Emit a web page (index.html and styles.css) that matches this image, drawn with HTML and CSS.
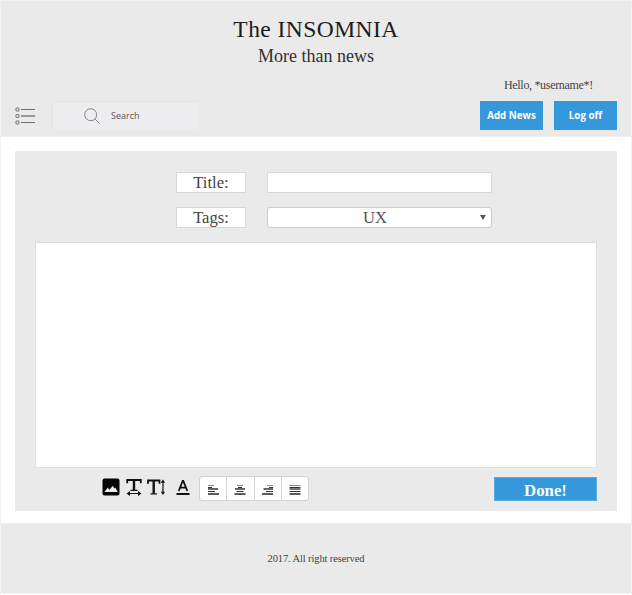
FILE: index.html
```html
<!DOCTYPE html>
<html lang="en">
<head>
<meta charset="utf-8">
<title>The INSOMNIA</title>
<link rel="stylesheet" href="styles.css">
</head>
<body>
<div class="page">
  <header class="header">
    <h1 class="brand">The INSOMNIA</h1>
    <p class="tagline">More than news</p>
    <p class="greeting">Hello, *username*!</p>
    <div class="toolbar">
      <svg class="menu" width="20" height="18" viewBox="0 0 20 18" fill="none" stroke="#6d6e73">
        <path d="M6 2.500h14M6 15.500h14"/><path d="M6 9h14" stroke="#96979c" stroke-width="2"/>
        <rect x="1" y="1" width="3" height="3" rx=".5"/><rect x="1" y="7.500" width="3" height="3" rx=".5"/><rect x="1" y="14" width="3" height="3" rx=".5"/>
      </svg>
      <div class="search">
        <svg width="16" height="16" viewBox="0 0 16 16" fill="none" stroke="#85868a"><circle cx="6.700" cy="6.700" r="6"/><path d="M11 11l4.500 4.500"/></svg>
        <span>Search</span>
      </div>
      <button class="btn add">Add News</button>
      <button class="btn">Log off</button>
    </div>
  </header>
  <main class="main">
    <form class="panel">
      <div class="row"><label class="label">Title:</label><div class="field"></div></div>
      <div class="row"><label class="label">Tags:</label>
        <div class="field select"><span>UX</span><svg class="caret" width="6" height="5" viewBox="0 0 6 5"><path d="M0 0h6L3 5z" fill="#555"/></svg></div>
      </div>
      <div class="editor"></div>
      <div class="actions">
        <svg class="ico-image" width="18" height="18" viewBox="0 0 18 18"><rect x=".5" y=".5" width="17" height="17" rx="2" fill="#050505"/><path d="M2.400 14l3.300-4.300 1.800 2 3.300-3.900 1.500 2.600 1-1 2.500 4.600z" fill="#eee"/></svg>
        <svg class="ico-width" width="16" height="18" viewBox="0 0 16 18" fill="none" stroke="#111"><path d="M1.200 5.200V2h13.600v3.200" stroke-width="1.800"/><path d="M8 2v10" stroke-width="2.400"/><path d="M4.500 12.400h7M2 15.500h12" stroke-width="1.200"/><path d="M.5 15.500l3.500-2.500v5zM15.500 15.500l-3.500-2.500v5z" fill="#111" stroke="none"/></svg>
        <svg class="ico-height" width="18" height="18" viewBox="0 0 18 18" fill="none" stroke="#111"><path d="M1 5.800V2.500h11.500v3.300" stroke-width="1.800"/><path d="M6.700 2.500v13" stroke-width="2.400"/><path d="M3.500 15.900h6.500M16 3v12" stroke-width="1.200"/><path d="M16 1.500l-2.300 3.200h4.300zM16 17l-2.300-3.200h4.300z" fill="#111" stroke="none"/></svg>
        <svg class="ico-color" width="14" height="16" viewBox="0 0 14 16" fill="none" stroke="#111"><path d="M2.700 11L6.700 1h.6l4 10M4.200 7.600h5.600" stroke-width="1.800"/><path d="M.5 14h13" stroke-width="2"/></svg>
        <div class="aligns">
          <span class="align"><svg width="12" height="10" viewBox="0 0 12 10"><path d="M1 .5h6" stroke="#888"/><path d="M1 2.500h4M1 6.500h7" stroke="#333"/><path d="M1 4h10" stroke="#666" stroke-width="2"/><path d="M1 9h11" stroke="#333" stroke-width="1.600"/></svg></span>
          <span class="align"><svg width="12" height="10" viewBox="0 0 12 10"><path d="M3 .5h6" stroke="#888"/><path d="M4 2.500h4M2.500 6.500h7" stroke="#333"/><path d="M1 4h10" stroke="#666" stroke-width="2"/><path d="M.5 9h11" stroke="#333" stroke-width="1.600"/></svg></span>
          <span class="align"><svg width="12" height="10" viewBox="0 0 12 10"><path d="M5 .5h6" stroke="#888"/><path d="M7 2.500h4M4 6.500h7" stroke="#333"/><path d="M1.500 4H11" stroke="#666" stroke-width="2"/><path d="M0 9h11" stroke="#333" stroke-width="1.600"/></svg></span>
          <span class="align"><svg width="12" height="10" viewBox="0 0 12 10"><path d="M.5.5h11" stroke="#888"/><path d="M.5 2.500h11M.5 6.500h11" stroke="#333"/><path d="M.5 4h11" stroke="#777" stroke-width="2"/><path d="M.5 9h11" stroke="#333" stroke-width="1.600"/></svg></span>
        </div>
        <button class="done" type="button">Done!</button>
      </div>
    </form>
  </main>
  <footer class="footer">2017. All right reserved</footer>
</div>
</body>
</html>
```
FILE: styles.css
```css
* { box-sizing: border-box; }
body { margin: 0; background: #fff; font-family: "Liberation Serif", serif; }
.page { width: 632px; height: 595px; border: 1px solid #f2f2f2; border-bottom: 0; display: flex; flex-direction: column; overflow: hidden; }
.header { height: 136px; flex: none; background: #eaeaea; border-bottom: 1px solid #f0f0f0; }
.brand, .tagline, .greeting { margin: 0; font-weight: 400; white-space: nowrap; text-align: center; }
.brand { padding-top: 14px; font-size: 23.5px; line-height: 28px; letter-spacing: .45px; color: #1c1c1c; }
.tagline { padding-top: 1px; font-size: 18px; line-height: 25px; color: #303030; }
.greeting { margin: 9px 0 0 503px; font-size: 12px; line-height: 15px; letter-spacing: -.32px; text-align: left; color: #444; }
.toolbar { display: flex; align-items: center; height: 29px; margin-top: 8px; padding: 0 14px; }
.menu { margin-top: 1px; }
.search { display: flex; align-items: center; width: 147px; height: 29px; margin: 0 auto 0 17px; padding-left: 31px; gap: 11px; background: #ededef; border: 1px solid #e3e3e4; border-right-color: #ececed; border-bottom-color: #ececed; border-radius: 2px; font: 9px "Open Sans", sans-serif; color: #55565a; }
.btn { width: 63px; height: 29px; padding: 0; border: 0; background: #3498db; color: #fff; font: 700 9.8px "Open Sans", sans-serif; white-space: nowrap; }
.add { margin-right: 11px; }
.main { height: 386px; flex: none; padding: 14px 14px 12px; background: #fff; }
.panel { height: 360px; padding: 21px 20px 0; background: #eaeaea; }
.row { display: flex; gap: 21px; margin: 0 0 14px 141px; }
.label, .field { height: 21px; background: #fff; border: 1px solid #d8d8d8; }
.label { width: 70px; font-size: 16.6px; line-height: 20px; text-align: center; color: #444; }
.field { width: 225px; }
.select { position: relative; border-radius: 3px; border-color: #ccc; font-size: 16.6px; line-height: 20px; text-align: center; color: #555; padding-right: 9px; }
.caret { position: absolute; right: 5px; top: 7px; }
.editor { width: 562px; height: 226px; background: #fff; border: 1px solid #dedede; }
.actions { display: flex; align-items: flex-start; padding: 8px 0 0 67px; }
.ico-image { margin-top: 2px; }
.ico-width { margin: 2px 0 0 6px; }
.ico-height { margin: 2px 0 0 5px; }
.ico-color { margin: 4px 0 0 11px; }
.aligns { display: flex; width: 110px; height: 25px; margin-left: 9px; border: 1px solid #d2d2d2; border-radius: 3px; background: #fff; }
.align { flex: 1; display: flex; align-items: center; justify-content: center; padding-top: 2px; }
.align + .align { border-left: 1px solid #d6d6d6; }
.done { width: 103px; height: 24px; margin: 1px 0 0 auto; padding: 3px 0 0; border: 1px solid #5aaae0; background: #3498db; color: #fff; font: 700 16.8px/20px "Liberation Serif", serif; }
.footer { height: 71px; flex: none; background: #eaeaea; border-top: 1px solid #f0f0f0; border-bottom: 1px solid #f4f4f4; text-align: center; font-size: 10.5px; line-height: 70px; letter-spacing: -.12px; color: #444; }
```
